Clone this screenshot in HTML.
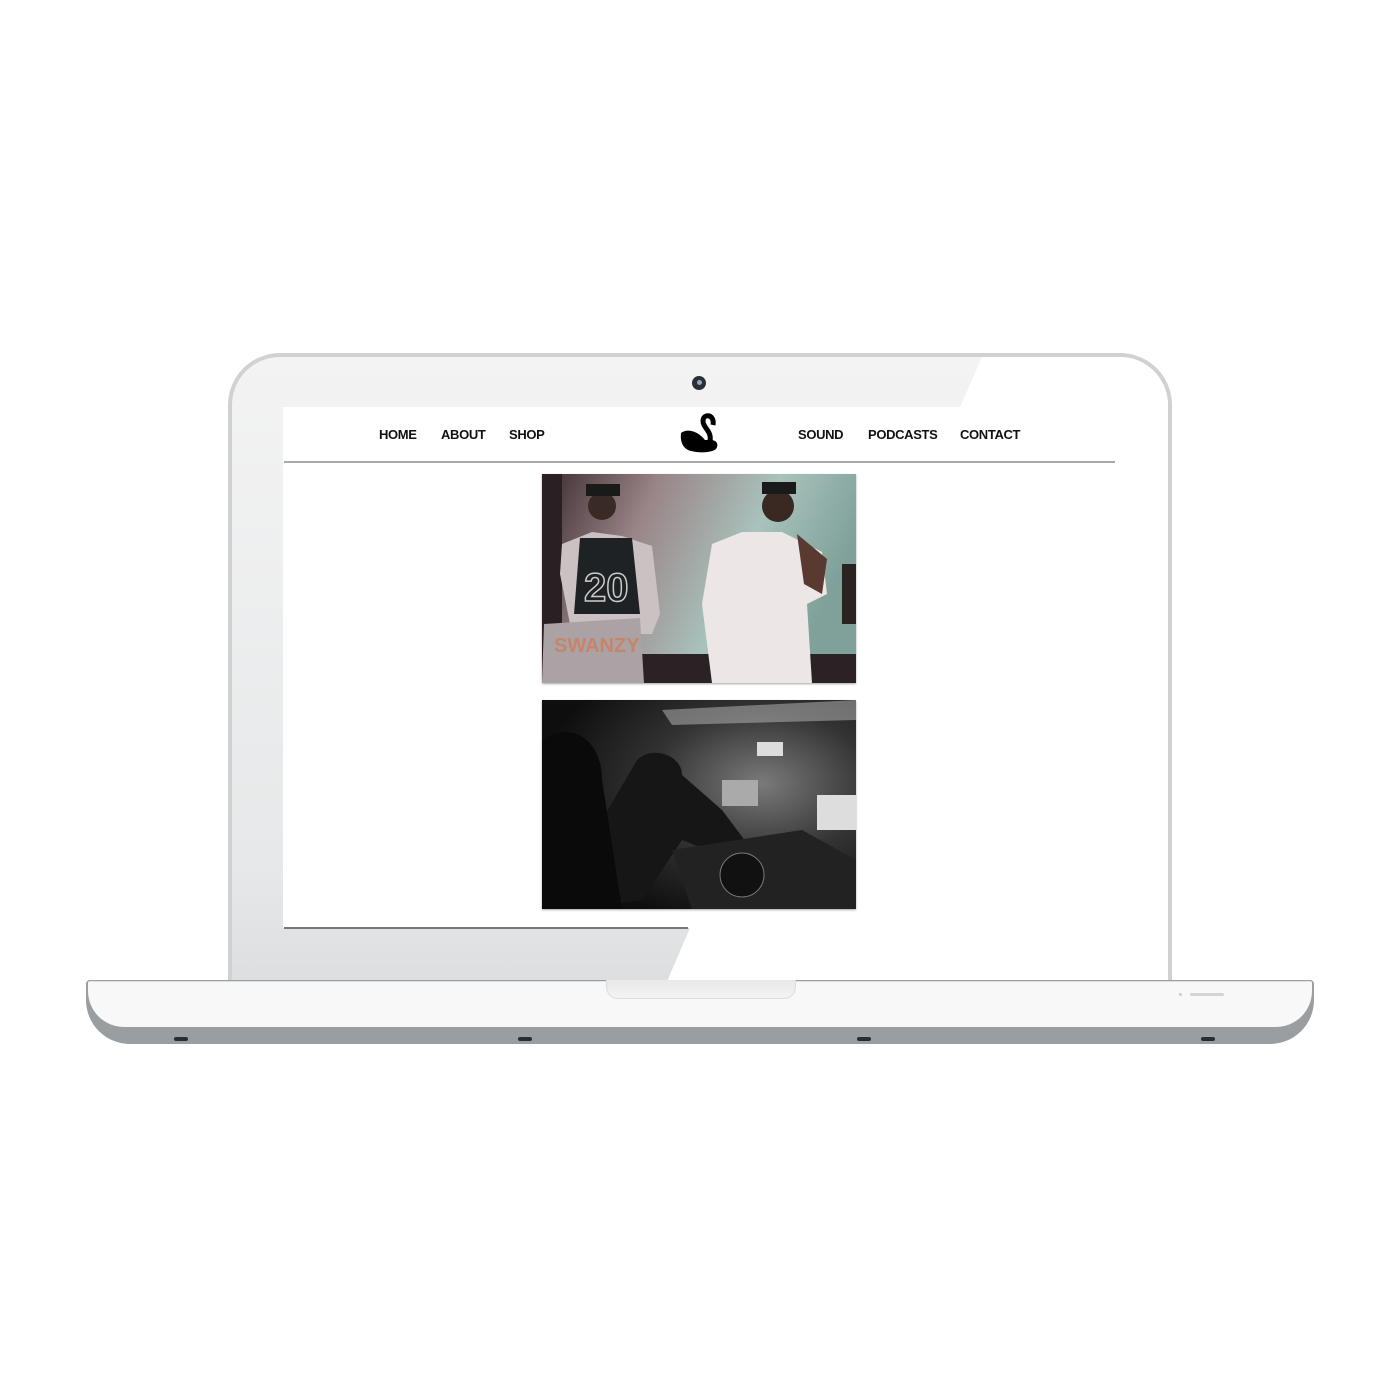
<!DOCTYPE html>
<html><head><meta charset="utf-8"><style>
body{margin:0;width:1400px;height:1400px;background:#fff;position:relative;overflow:hidden;font-family:"Liberation Sans",Arial,sans-serif}
.abs{position:absolute}
.lid{left:228px;top:353px;width:944px;height:640px;border-radius:52px 52px 0 0;background:#cfd1d3}
.lid2{left:232px;top:357px;width:936px;height:636px;border-radius:48px 48px 0 0;background:linear-gradient(#f3f3f3,#e6e8e9 80%,#dcdddf)}
.glare{left:232px;top:357px;width:936px;height:636px;border-radius:48px 48px 0 0;background:#fff;clip-path:polygon(750px 0,936px 0,936px 636px,430px 636px,458px 571px,883px 571px,883px 50px,728px 50px)}
.screen{left:283px;top:407px;width:832px;height:521px;background:#fff}
.nav{top:427px;font-size:13px;font-weight:bold;color:#111;letter-spacing:-0.35px}
.hline{left:284px;top:461px;width:831px;height:2px;background:#a8a8a8}
.bline{left:284px;top:927px;width:404px;height:2px;background:#777}
.base{left:86px;top:980px;width:1228px;height:64px;border-radius:4px 4px 44px 44px;background:#9b9ea1}
.basetop{left:88px;top:981px;width:1224px;height:45px;border-radius:2px 2px 36px 36px;background:#f8f8f8;border-top:1px solid #e0e0e0}
.notch{left:606px;top:980px;width:188px;height:18px;border-radius:0 0 12px 12px;background:linear-gradient(#e8e8e8,#f4f4f4);border:1px solid #ddd;border-top:none}
.foot{top:1037px;width:14px;height:4px;border-radius:2px;background:#2a2e31}
.img{left:542px;width:314px;height:209px;box-shadow:0 1px 2px rgba(0,0,0,.35)}
</style></head><body>
<div class="abs lid"></div>
<div class="abs lid2"></div>
<div class="abs glare"></div>
<div class="abs" style="left:692px;top:376px;width:14px;height:14px;border-radius:50%;background:#2b3036"></div>
<div class="abs" style="left:697px;top:380px;width:5px;height:5px;border-radius:50%;background:#8fa8c0"></div>
<div class="abs screen"></div>
<div class="abs nav" style="left:379px">HOME</div>
<div class="abs nav" style="left:441px">ABOUT</div>
<div class="abs nav" style="left:509px">SHOP</div>
<div class="abs nav" style="left:798px">SOUND</div>
<div class="abs nav" style="left:868px">PODCASTS</div>
<div class="abs nav" style="left:960px">CONTACT</div>
<svg class="abs" style="left:0;top:0" width="1400" height="1400">
<path d="M713,425 C715,414 703,413 703,421 C703,428 712,431 710,441" fill="none" stroke="#000" stroke-width="5"/>
<path d="M681,433 C687,428 698,431 705,440 L711,440 C717,440 719,445 716,449 C711,453 699,453 691,451 C683,449 680,442 681,433Z" fill="#000"/>
</svg>
<div class="abs hline"></div>
<svg class="abs img" style="top:474px" viewBox="0 0 314 209" preserveAspectRatio="none">
<defs><linearGradient id="bg1" x1="0" y1="0" x2="1" y2="0.3"><stop offset="0" stop-color="#3a2a2e"/><stop offset=".35" stop-color="#9a8588"/><stop offset=".7" stop-color="#a9c2bc"/><stop offset="1" stop-color="#7fa19a"/></linearGradient></defs>
<rect width="314" height="209" fill="url(#bg1)"/>
<rect y="180" width="314" height="29" fill="#2a2224"/>
<rect x="0" y="0" width="20" height="209" fill="#2a1f22"/>
<path d="M20,70 L50,58 L80,62 L110,72 L118,140 L110,160 L30,160 L18,100Z" fill="#c9c1c2"/>
<path d="M38,64 L90,64 L98,140 L32,140Z" fill="#1e2224"/>
<text x="42" y="127" font-family="Liberation Sans" font-size="40" font-weight="bold" fill="none" stroke="#ccc" stroke-width="1.5">20</text>
<circle cx="60" cy="32" r="14" fill="#3a2a26"/>
<rect x="44" y="10" width="34" height="12" fill="#1a1a1a"/>
<path d="M2,150 L98,144 L102,209 L0,209Z" fill="#aaa2a4"/>
<text x="12" y="178" font-family="Liberation Sans" font-size="20" font-weight="bold" fill="#c8846a">SWANZY</text>
<path d="M170,70 L200,58 L240,58 L280,78 L285,120 L265,130 L270,209 L170,209 L160,130Z" fill="#ece6e6"/>
<circle cx="236" cy="32" r="16" fill="#3a2822"/>
<rect x="220" y="8" width="34" height="12" fill="#1a1a1a"/>
<path d="M255,60 L285,85 L280,120 L262,110Z" fill="#5a3a30"/>
<rect x="300" y="90" width="14" height="60" fill="#2b2222"/>
</svg>
<svg class="abs img" style="top:700px" viewBox="0 0 314 209" preserveAspectRatio="none">
<defs><radialGradient id="bg2" cx=".7" cy=".4" r=".7"><stop offset="0" stop-color="#7a7a7a"/><stop offset=".5" stop-color="#333"/><stop offset="1" stop-color="#0e0e0e"/></radialGradient></defs>
<rect width="314" height="209" fill="url(#bg2)"/>
<path d="M120,10 L314,0 L314,20 L130,25Z" fill="#bbb" opacity=".5"/>
<rect x="215" y="42" width="26" height="14" fill="#ddd"/>
<rect x="180" y="80" width="36" height="26" fill="#aaa"/>
<rect x="275" y="95" width="39" height="35" fill="#ddd"/>
<path d="M95,60 C110,45 140,55 140,75 L180,110 L210,150 L190,160 L140,140 L100,200 L40,209 L60,120Z" fill="#161616"/>
<path d="M0,40 C30,20 60,40 60,80 L80,209 L0,209Z" fill="#0a0a0a"/>
<path d="M130,150 L260,130 L314,160 L314,209 L150,209Z" fill="#222"/>
<circle cx="200" cy="175" r="22" fill="#111" stroke="#777"/>
</svg>
<div class="abs bline"></div>
<div class="abs base"></div>
<div class="abs basetop"></div>
<div class="abs notch"></div>
<div class="abs" style="left:1190px;top:993px;width:34px;height:3px;border-radius:2px;background:#d4d4d4"></div>
<div class="abs" style="left:1179px;top:993px;width:3px;height:3px;border-radius:50%;background:#ccc"></div>
<div class="abs foot" style="left:174px"></div>
<div class="abs foot" style="left:518px"></div>
<div class="abs foot" style="left:857px"></div>
<div class="abs foot" style="left:1201px"></div>
</body></html>
